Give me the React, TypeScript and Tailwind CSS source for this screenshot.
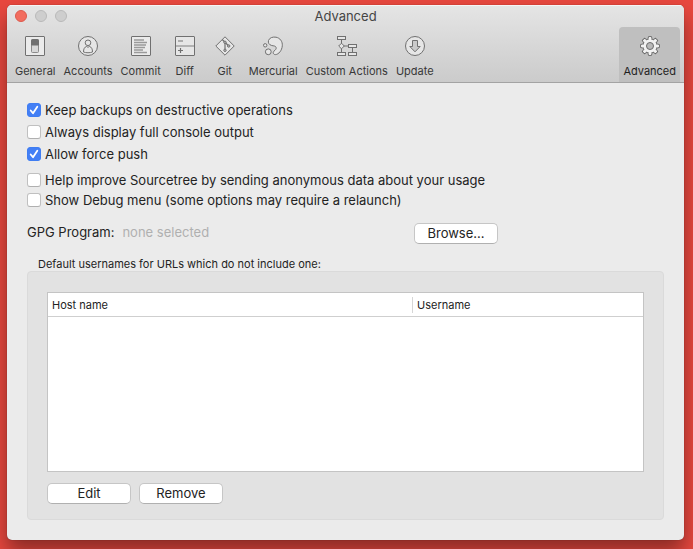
import { useState } from "react";
import type { ReactNode } from "react";

function Icon({ children }: { children: ReactNode }) {
  return (
    <svg
      viewBox="0 0 20 20"
      className="h-5 w-5"
      fill="none"
      stroke="currentColor"
      strokeWidth="1"
      aria-hidden="true"
    >
      {children}
    </svg>
  );
}

const tabs: { name: string; icon: ReactNode }[] = [
  {
    name: "General",
    icon: (
      <Icon>
        <rect x="0.5" y="0.5" width="19" height="19" rx="0.5" fill="#ebebeb" />
        <rect x="6.5" y="3.5" width="7" height="13" rx="1" fill="#d8d8d8" stroke="#8b8b8b" />
        <path d="M6.5 4.5a1 1 0 0 1 1-1h5a1 1 0 0 1 1 1V9h-7z" fill="currentColor" />
      </Icon>
    ),
  },
  {
    name: "Accounts",
    icon: (
      <Icon>
        <circle cx="10" cy="10" r="9.5" fill="#e6e6e6" />
        <circle cx="10" cy="6.8" r="2.8" />
        <path d="M5.5 16c0-3 1-5 3-5.5.8.8 2.2.8 3 0 2 .5 3 2.5 3 5.5-2.5 1-6.5 1-9 0z" />
      </Icon>
    ),
  },
  {
    name: "Commit",
    icon: (
      <Icon>
        <rect x="0.5" y="0.5" width="19" height="19" rx="0.5" fill="#ebebeb" />
        <path
          d="M3 4h10M3 6.5h13M3 9h12M3 11.500h11M3 14h9M3 16.500h13"
          stroke="#9a9a9a"
          strokeWidth="1.4"
        />
      </Icon>
    ),
  },
  {
    name: "Diff",
    icon: (
      <Icon>
        <rect x="0.5" y="0.5" width="19" height="19" rx="0.5" fill="#e6e6e6" />
        <path d="M1 10h18" strokeWidth="1.5" stroke="#a0a0a0" />
        <path d="M3 5h5" stroke="#9a9a9a" strokeWidth="1.5" />
        <path d="M3 14.5h5M5.500 12v5" strokeWidth="1.2" />
      </Icon>
    ),
  },
  {
    name: "Git",
    icon: (
      <Icon>
        <path d="M10 .8 19.2 10 10 19.2.8 10z" fill="#e6e6e6" />
        <path d="M7.2 3.500 10 6.300v8L10 6.300l3.700 3.700" strokeWidth="1.2" />
        <circle cx="10" cy="6.3" r="1.2" fill="#bdbdbd" />
        <circle cx="10" cy="14.300" r="1.2" fill="#bdbdbd" />
        <circle cx="13.7" cy="10" r="1.2" fill="#bdbdbd" />
      </Icon>
    ),
  },
  {
    name: "Mercurial",
    icon: (
      <Icon>
        <path
          d="M5.5 4.5C6.5 1.5 10 .7 13 1.2c4 .7 6.700 4.300 6.300 8.600-.4 4.700-3.600 8.600-6.800 8.800-2.200.1-3-2.200-1.500-3.500 1.500-1.200 2.500-2.200 2.100-3.600-.5-1.800-2.500-1.500-4.400-2C6.200 8.900 4.800 6.800 5.500 4.500z"
          fill="#e6e6e6"
        />
        <circle cx="5.3" cy="15.8" r="2.9" fill="#e6e6e6" />
        <circle cx="2.2" cy="9.3" r="1.7" fill="#e6e6e6" />
      </Icon>
    ),
  },
  {
    name: "Custom Actions",
    icon: (
      <Icon>
        <path d="M4.5 3.5v13M4.5 10h7M15.5 11.5v5" />
        <g fill="#e6e6e6">
          <rect x="0.5" y="0.5" width="8" height="3" />
          <rect x="0.5" y="16.5" width="8" height="3" />
          <rect x="11.5" y="8.5" width="8" height="3" />
          <rect x="11.5" y="16.5" width="8" height="3" />
          <path d="M4.5 7.2 7.3 10l-2.8 2.8L1.7 10z" />
        </g>
      </Icon>
    ),
  },
  {
    name: "Update",
    icon: (
      <Icon>
        <circle cx="10" cy="10" r="9.5" fill="#e6e6e6" />
        <path d="M7.5 4.5h5v6h2.7L10 15.800 4.800 10.500h2.700z" fill="#c9c9c9" />
      </Icon>
    ),
  },
];

const toothAngles = [0, 45, 90, 135, 180, 225, 270, 315];

const gear = (
  <Icon>
    {toothAngles.map((a) => (
      <path
        key={a}
        d="M7.800 4 8.500.6h3L12.200 4z"
        transform={`rotate(${a} 10 10)`}
        fill="#f2f2f2"
        strokeLinejoin="round"
      />
    ))}
    <circle cx="10" cy="10" r="7" fill="#f2f2f2" />
    {toothAngles.map((a) => (
      <path
        key={a}
        d="M8.300 4.800 9 1.200h2l.7 3.600z"
        transform={`rotate(${a} 10 10)`}
        fill="#f2f2f2"
        stroke="none"
      />
    ))}
    <circle cx="10" cy="10" r="3.5" fill="#b9b9b9" />
  </Icon>
);

function ToolbarItem({ name, icon, active }: { name: string; icon: ReactNode; active?: boolean }) {
  return (
    <button
      type="button"
      aria-pressed={!!active}
      className={
        active
          ? "flex h-[55px] min-w-10 flex-col items-center rounded-t-[4px] bg-[#bfbfbf] px-1 pt-[9px] text-[#6b6b6b]"
          : "flex h-[55px] min-w-10 flex-col items-center px-1 pt-[9px] text-[#707070]"
      }
    >
      {icon}
      <span
        className={
          active
            ? "mt-2 text-[11px] leading-[14px] whitespace-nowrap text-[#1e1e1e]"
            : "mt-2 text-[11px] leading-[14px] whitespace-nowrap text-[#383838]"
        }
      >
        {name}
      </span>
    </button>
  );
}

function Option({ label, initial, tight }: { label: string; initial?: boolean; tight?: boolean }) {
  const [checked, setChecked] = useState(!!initial);
  return (
    <label className={tight ? "flex h-5 items-center gap-1" : "flex h-[22px] items-center gap-1"}>
      <span className="grid h-[14px] w-[14px] shrink-0">
        <input
          type="checkbox"
          checked={checked}
          onChange={(e) => setChecked(e.target.checked)}
          className="col-start-1 row-start-1 h-[14px] w-[14px] appearance-none rounded-[3px] border border-[#c0c0c0] border-b-[#b0b0b0] bg-white checked:border-[#3f7df2] checked:bg-[#437ff5]"
        />
        {checked && (
          <svg
            viewBox="0 0 14 14"
            className="pointer-events-none col-start-1 row-start-1 h-[14px] w-[14px]"
            fill="none"
            stroke="white"
            strokeWidth="1.8"
            strokeLinecap="round"
            strokeLinejoin="round"
            aria-hidden="true"
          >
            <path d="M3.7 7.5 6 10.2l4.300-6.500" />
          </svg>
        )}
      </span>
      <span>{label}</span>
    </label>
  );
}

function PushButton({ children }: { children: ReactNode }) {
  return (
    <button
      type="button"
      className="h-[21px] w-[84px] rounded-[5px] border border-[#c6c6c6] border-b-[#b0b0b0] bg-white text-[13px] leading-[19px]"
    >
      {children}
    </button>
  );
}

export default function App() {
  return (
    <div className="flex min-h-screen flex-col bg-[#e8483f] pt-[5px] pr-[9px] pb-[9px] pl-[7px] font-['Inter',sans-serif] text-[13px] leading-4 text-[#232323]">
      <main className="flex flex-1 flex-col overflow-hidden rounded-[5px] bg-[#ebebeb] shadow-[0_12px_20px_rgba(0,0,0,0.4),0_0_1px_rgba(0,0,0,0.5)]">
        <header className="border-b border-[#a3a3a3] bg-linear-to-b from-[#e5e5e5] to-[#cbcbcb] shadow-[inset_0_1px_0_#f5f5f5]">
          <div className="grid h-[22px] grid-cols-[1fr_auto_1fr] items-center px-2">
            <div className="flex gap-2">
              <button type="button" aria-label="Close" className="h-3 w-3 rounded-full border border-[#dc5a4d] bg-[#f26d5f]" />
              <button type="button" aria-label="Minimize" className="h-3 w-3 rounded-full border border-[#b9b9b9] bg-[#cecece]" />
              <button type="button" aria-label="Zoom" className="h-3 w-3 rounded-full border border-[#b9b9b9] bg-[#cecece]" />
            </div>
            <h1 className="text-[13px] text-[#454545]">Advanced</h1>
          </div>
          <nav className="flex px-1">
            {tabs.map((t) => (
              <ToolbarItem key={t.name} name={t.name} icon={t.icon} />
            ))}
            <div className="ml-auto">
              <ToolbarItem name="Advanced" icon={gear} active />
            </div>
          </nav>
        </header>

        <div className="flex flex-1 flex-col px-5 pt-4 pb-5">
          <Option label="Keep backups on destructive operations" initial />
          <Option label="Always display full console output" />
          <Option label="Allow force push" initial />
          <div className="mt-[5px]">
            <Option tight label="Help improve Sourcetree by sending anonymous data about your usage" />
            <Option tight label="Show Debug menu (some options may require a relaunch)" />
          </div>

          <div className="mt-[13px] flex items-start">
            <div className="flex w-[387px] gap-2 leading-[18px]">
              <span>GPG Program:</span>
              <span className="text-[#b0b0b0]">none selected</span>
            </div>
            <PushButton>Browse...</PushButton>
          </div>

          <h2 id="usernames" className="mt-[13px] pl-[11px] text-[11px] leading-[14px]">
            Default usernames for URLs which do not include one:
          </h2>
          <section
            aria-labelledby="usernames"
            className="flex flex-1 flex-col rounded-[4px] border border-[#dadada] bg-[#e2e2e2] px-[19px] pt-5 pb-[15px]"
          >
            <div className="flex-1 border border-[#c4c4c4] bg-white">
              <table className="w-full table-fixed border-separate border-spacing-0 text-left text-[11px] leading-[14px]">
                <thead>
                  <tr className="h-6">
                    <th scope="col" className="w-[365px] border-b border-[#cfcfcf] p-0 font-normal">
                      <div className="border-r border-[#d6d6d6] py-px pl-1">Host name</div>
                    </th>
                    <th scope="col" className="border-b border-[#cfcfcf] p-0 pl-1 font-normal">
                      Username
                    </th>
                  </tr>
                </thead>
                <tbody />
              </table>
            </div>
            <div className="mt-[11px] flex gap-2">
              <PushButton>Edit</PushButton>
              <PushButton>Remove</PushButton>
            </div>
          </section>
        </div>
      </main>
    </div>
  );
}
